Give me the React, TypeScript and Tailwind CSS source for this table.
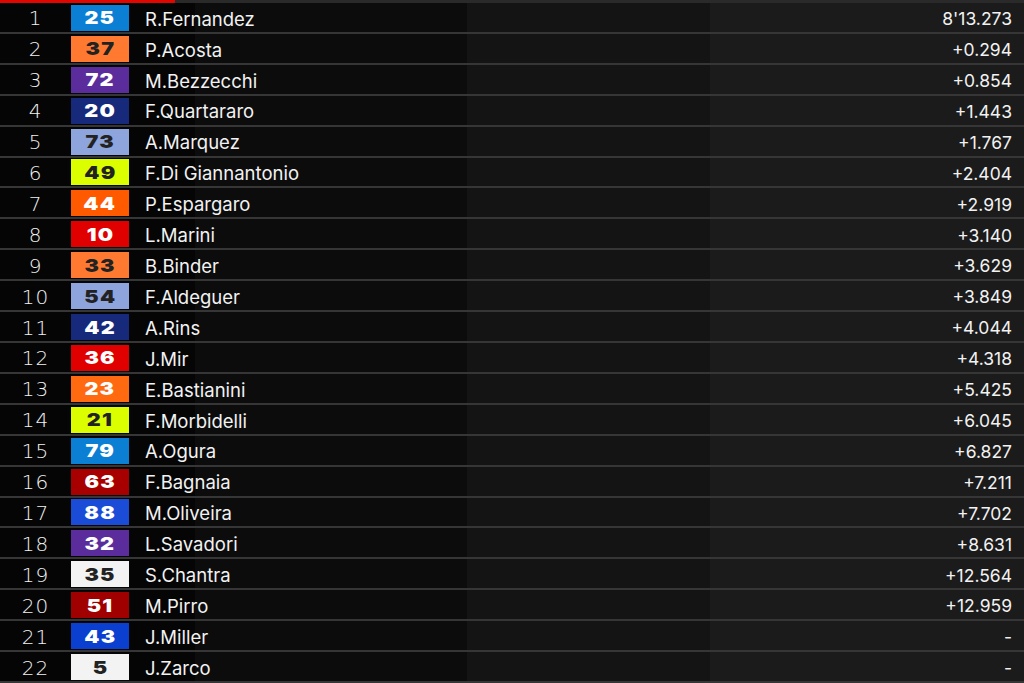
import React from 'react';

type Rider = { pos: number; num: string; name: string; gap: string; bg: string; fg: string };

const RIDERS: Rider[] = [
  { pos: 1, num: '25', name: 'R.Fernandez', gap: "8'13.273", bg: 'bg-[#0b7fd4]', fg: 'text-white' },
  { pos: 2, num: '37', name: 'P.Acosta', gap: '+0.294', bg: 'bg-[#ff7a30]', fg: 'text-[#222]' },
  { pos: 3, num: '72', name: 'M.Bezzecchi', gap: '+0.854', bg: 'bg-[#5b2d9c]', fg: 'text-white' },
  { pos: 4, num: '20', name: 'F.Quartararo', gap: '+1.443', bg: 'bg-[#16297a]', fg: 'text-white' },
  { pos: 5, num: '73', name: 'A.Marquez', gap: '+1.767', bg: 'bg-[#8ea4dc]', fg: 'text-[#222]' },
  { pos: 6, num: '49', name: 'F.Di Giannantonio', gap: '+2.404', bg: 'bg-[#dcff00]', fg: 'text-[#222]' },
  { pos: 7, num: '44', name: 'P.Espargaro', gap: '+2.919', bg: 'bg-[#ff5a00]', fg: 'text-white' },
  { pos: 8, num: '10', name: 'L.Marini', gap: '+3.140', bg: 'bg-[#e00000]', fg: 'text-white' },
  { pos: 9, num: '33', name: 'B.Binder', gap: '+3.629', bg: 'bg-[#ff7a30]', fg: 'text-[#222]' },
  { pos: 10, num: '54', name: 'F.Aldeguer', gap: '+3.849', bg: 'bg-[#8ea4dc]', fg: 'text-[#222]' },
  { pos: 11, num: '42', name: 'A.Rins', gap: '+4.044', bg: 'bg-[#16297a]', fg: 'text-white' },
  { pos: 12, num: '36', name: 'J.Mir', gap: '+4.318', bg: 'bg-[#e00000]', fg: 'text-white' },
  { pos: 13, num: '23', name: 'E.Bastianini', gap: '+5.425', bg: 'bg-[#ff6a10]', fg: 'text-white' },
  { pos: 14, num: '21', name: 'F.Morbidelli', gap: '+6.045', bg: 'bg-[#dcff00]', fg: 'text-[#222]' },
  { pos: 15, num: '79', name: 'A.Ogura', gap: '+6.827', bg: 'bg-[#0b7fd4]', fg: 'text-white' },
  { pos: 16, num: '63', name: 'F.Bagnaia', gap: '+7.211', bg: 'bg-[#a80000]', fg: 'text-white' },
  { pos: 17, num: '88', name: 'M.Oliveira', gap: '+7.702', bg: 'bg-[#1a4cd8]', fg: 'text-white' },
  { pos: 18, num: '32', name: 'L.Savadori', gap: '+8.631', bg: 'bg-[#5b2d9c]', fg: 'text-white' },
  { pos: 19, num: '35', name: 'S.Chantra', gap: '+12.564', bg: 'bg-[#f3f3f3]', fg: 'text-[#222]' },
  { pos: 20, num: '51', name: 'M.Pirro', gap: '+12.959', bg: 'bg-[#a00000]', fg: 'text-white' },
  { pos: 21, num: '43', name: 'J.Miller', gap: '-', bg: 'bg-[#0a3fd0]', fg: 'text-white' },
  { pos: 22, num: '5', name: 'J.Zarco', gap: '-', bg: 'bg-[#f3f3f3]', fg: 'text-[#222]' },
];

export default function App() {
  return (
    <div className="w-[1024px] h-[683px] overflow-hidden bg-[#050505] flex flex-col font-['Inter',sans-serif]">
      <div className="h-[3px] flex">
        <div className="w-[175px] bg-[#e10600]" />
        <div className="flex-1 bg-[#2a2a2a]" />
      </div>
      <div className="flex-1 min-h-0 grid grid-rows-[repeat(22,minmax(0,1fr))] bg-[linear-gradient(to_right,#050505_0px,#050505_195px,#0c0c0c_195px,#0c0c0c_467px,#141414_467px,#141414_710px,#1b1b1b_710px)]">
        {RIDERS.map(r => (
          <div key={r.pos} className="flex items-center min-h-0 border-b-2 border-[#363636] leading-none">
            <div className="w-[71px] pt-[2px] text-center text-[20px] font-extralight text-[#f2f2f2] font-['DejaVu_Sans',sans-serif] tracking-[1px]">
              {r.pos}
            </div>
            <div className={`w-[58px] h-[26px] mt-[1px] flex items-center justify-center ${r.bg}`}>
              <span className={`inline-block pt-[1px] scale-x-[1.2] text-[18px] font-black tracking-[1px] ${r.fg}`}>{r.num}</span>
            </div>
            <div className="ml-[16px] pt-[3px] flex-1 text-[18.5px] text-[#f2f2f2]">{r.name}</div>
            <div className="pr-[12px] pt-[3px] text-[17.5px] text-[#f2f2f2]">{r.gap}</div>
          </div>
        ))}
      </div>
    </div>
  );
}
